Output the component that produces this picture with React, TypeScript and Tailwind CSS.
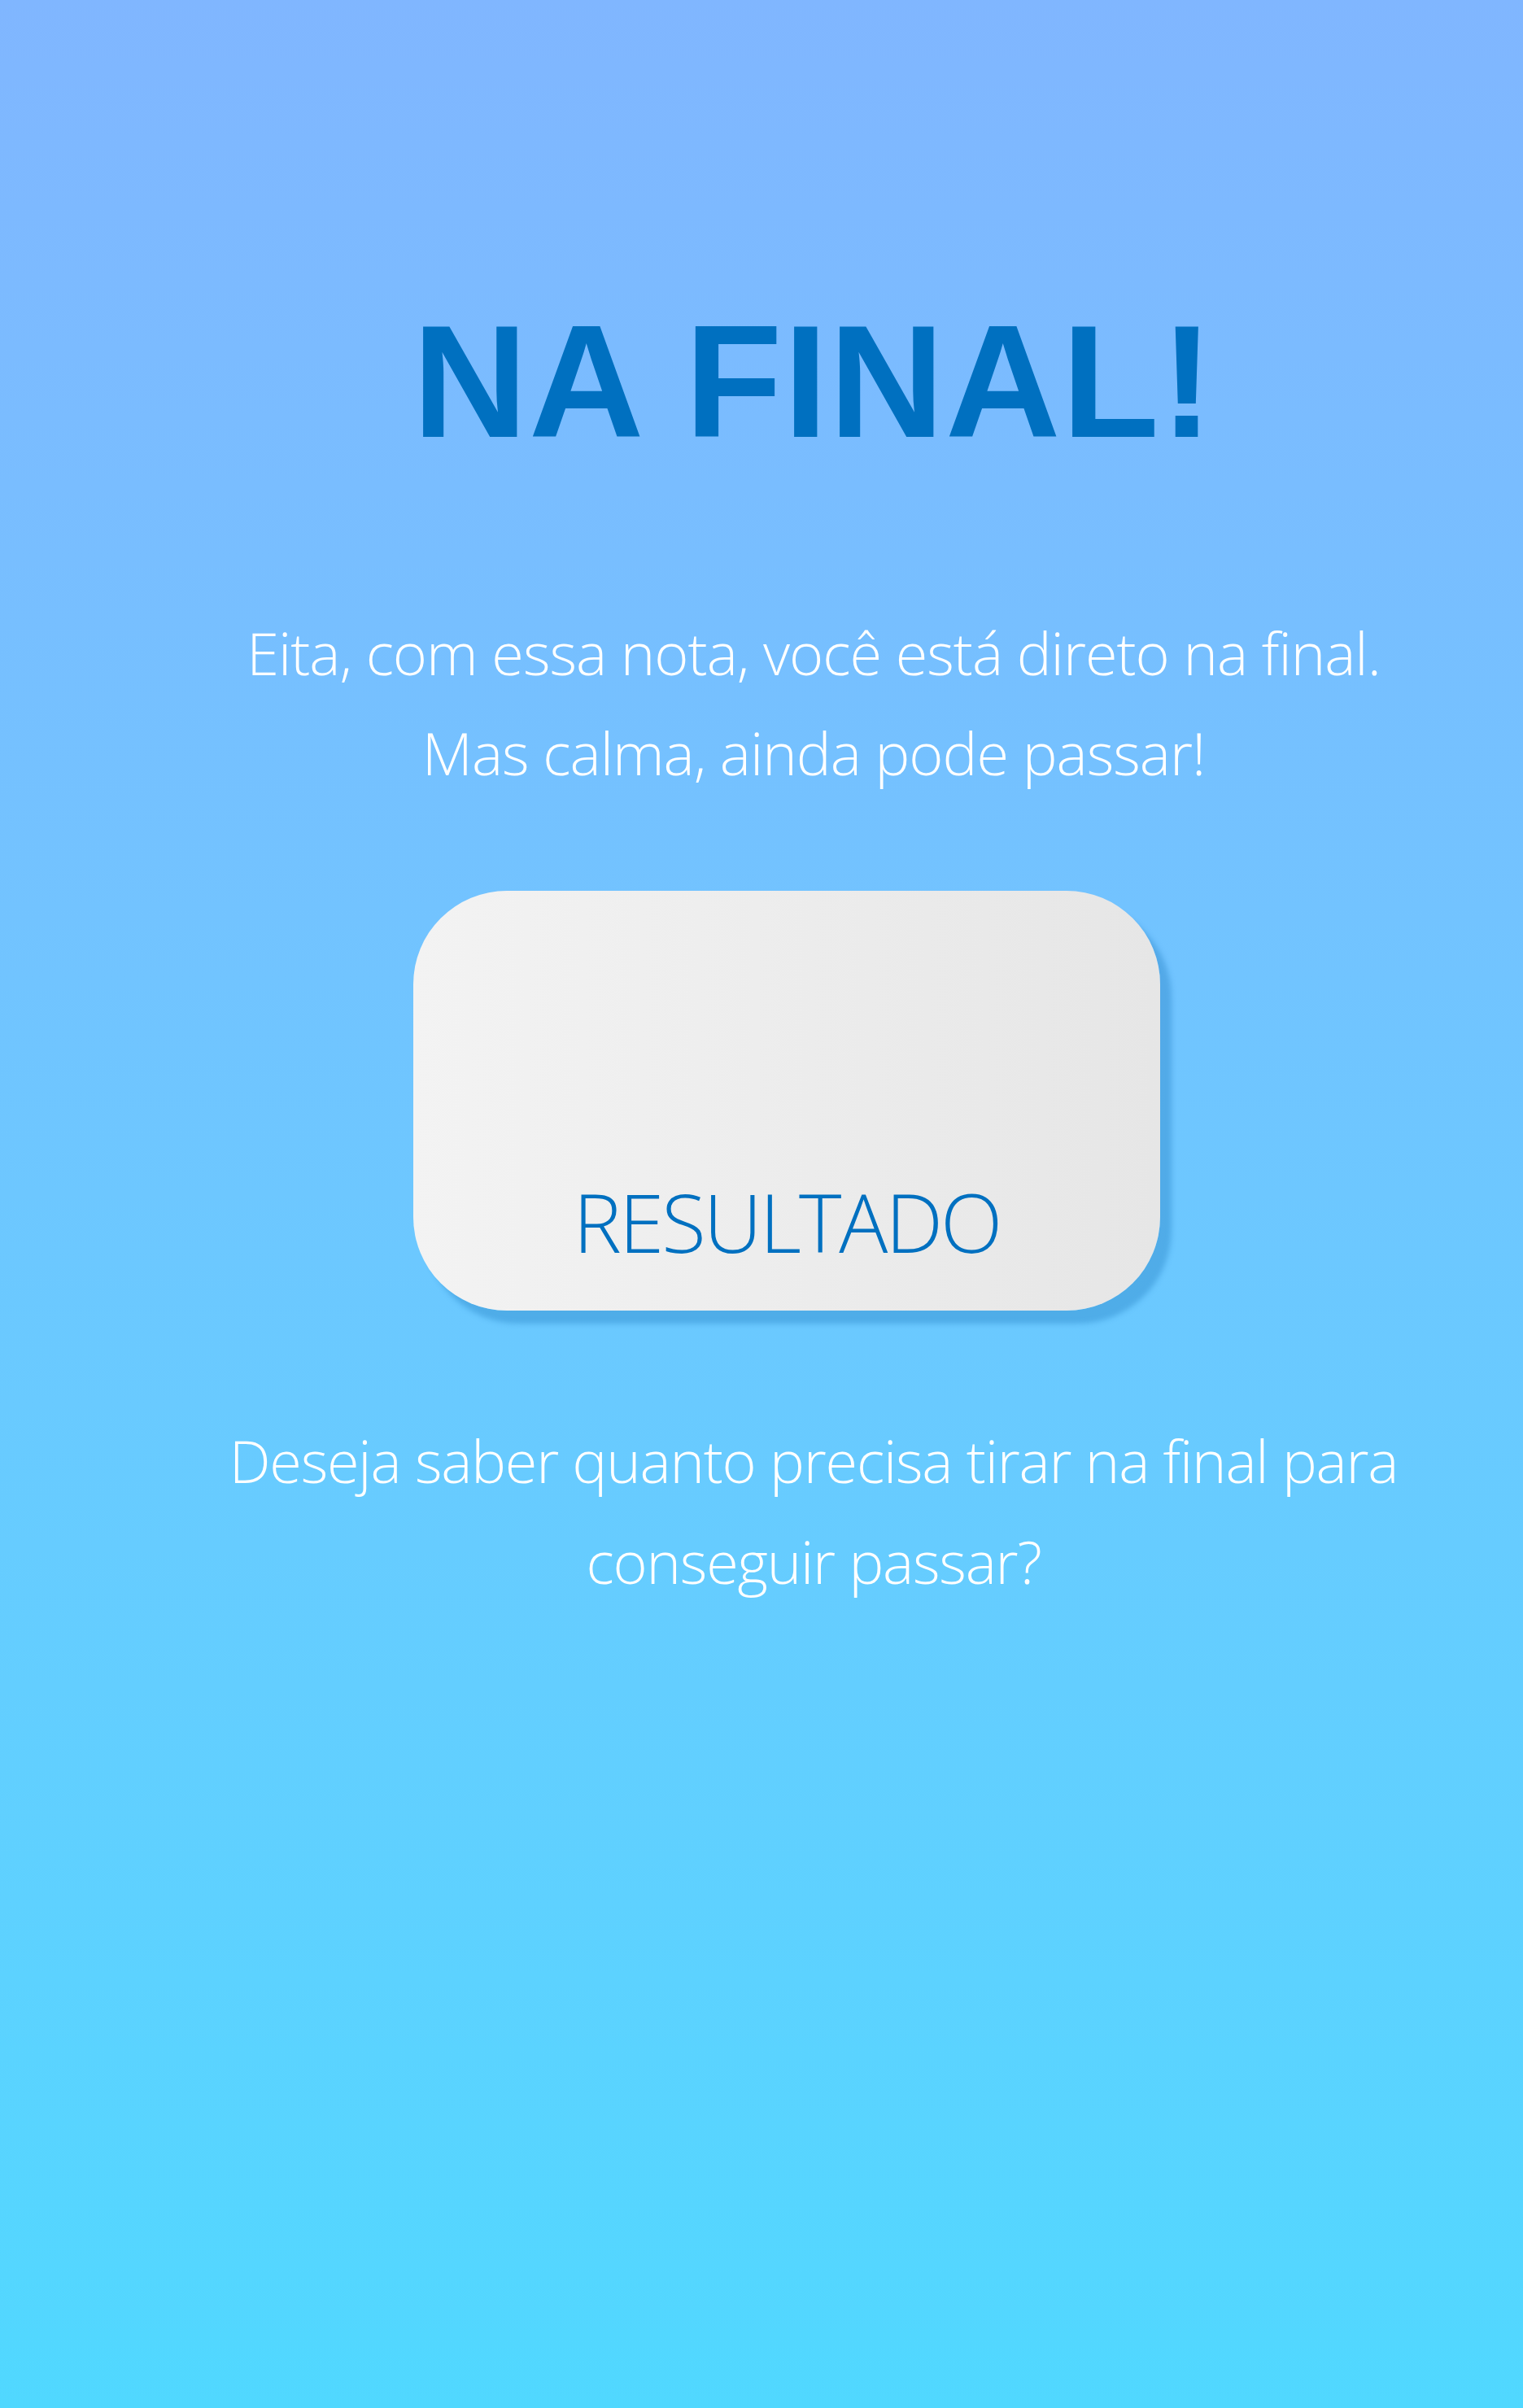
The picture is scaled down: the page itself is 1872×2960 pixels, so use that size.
import React from 'react';

const bodyFont = "font-['Open_Sans',_'Noto_Sans',_sans-serif]";

export default function App() {
  return (
    <div className="min-h-[2960px] w-full bg-gradient-to-b from-[#80b6ff] to-[#50d8ff]">
      <div className="flex w-full flex-col items-center pl-[128px] pt-[372px]">
        {/* Title */}
        <h1 className="font-['Liberation_Sans',_Arial,_sans-serif] text-[196px] font-bold leading-none tracking-[1.5px] text-[#0070c0]">
          NA FINAL!
        </h1>

        {/* Intro */}
        <div className={`${bodyFont} mt-[173px] text-center text-[72px] font-light leading-[123px] tracking-[-1px] text-white`}>
          <p>Eita, com essa nota, você está direto na final.</p>
          <p>Mas calma, ainda pode passar!</p>
        </div>

        {/* Result card */}
        <button
          type="button"
          className="mr-[66px] mt-[108px] flex h-[516px] w-[918px] items-end justify-center rounded-[115px] bg-gradient-to-r from-[#f3f3f3] to-[#e6e6e6] pb-[40px] shadow-[14px_16px_6px_rgba(30,120,190,0.35)]"
        >
          <span className={`${bodyFont} text-[100px] font-light leading-[140px] tracking-[-3px] text-[#0070c0]`}>
            RESULTADO
          </span>
        </button>

        {/* Question */}
        <div className={`${bodyFont} mt-[122px] text-center text-[72px] font-light leading-[124px] tracking-[-1.2px] text-white`}>
          <p>Deseja saber quanto precisa tirar na final para</p>
          <p>conseguir passar?</p>
        </div>
      </div>
    </div>
  );
}
